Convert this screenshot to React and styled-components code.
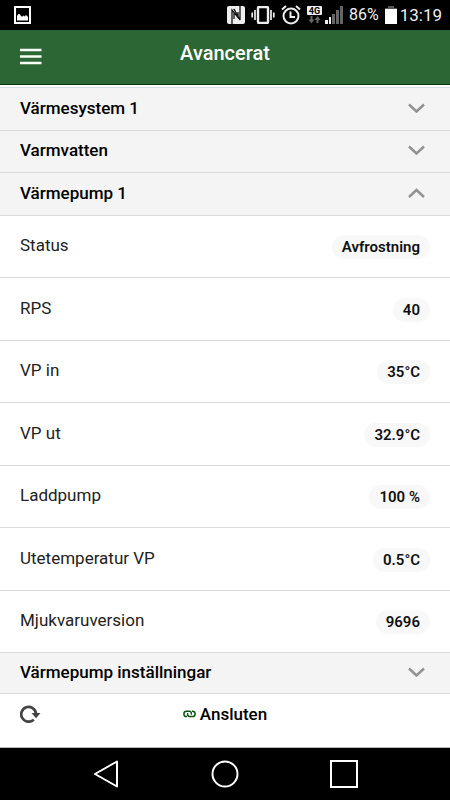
import React, { useState } from "react";
import styled, { createGlobalStyle } from "styled-components";

const GlobalStyle = createGlobalStyle`
  *, *::before, *::after { box-sizing: border-box; }
  body {
    margin: 0;
    background: #fff;
    color: #000;
    font-family: Roboto, "Liberation Sans", sans-serif;
  }
  button {
    margin: 0;
    padding: 0;
    border: 0;
    background: none;
    color: inherit;
    font: inherit;
    cursor: pointer;
  }
  svg { display: block; flex: none; }
`;

const Screen = styled.div`
  display: flex;
  flex-direction: column;
  min-height: 100vh;
`;

const StatusBar = styled.div`
  display: flex;
  align-items: center;
  justify-content: space-between;
  height: 30px;
  padding: 0 8px 0 14px;
  background: #000;
  color: #eee;
`;

const StatusGroup = styled.div`
  display: flex;
  align-items: center;
  gap: ${(p) => (p.$tight ? 3 : 6)}px;
`;

const StatusText = styled.span`
  font-size: ${(p) => (p.$clock ? 17 : 16)}px;
  line-height: 30px;
`;

const AppBar = styled.header`
  display: grid;
  grid-template-columns: 1fr auto 1fr;
  height: 55px;
  padding: 0 20px;
  border-bottom: 1px solid #063b0b;
  background: #2c6635;
  color: #fff;
`;

const MenuButton = styled.button`
  justify-self: start;
  padding-bottom: 2px;
`;

const Title = styled.h1`
  margin: 0;
  font-size: 20px;
  font-weight: 500;
  line-height: 46px;
`;

const List = styled.main`
  display: flex;
  flex: 1;
  flex-direction: column;
  margin-top: 2px;
  border-top: 1px solid #dcdcdc;
`;

const SectionHeading = styled.h2`
  display: flex;
  flex: ${(p) => (p.$last ? "0 0 41px" : "17 1 0")};
  margin: 0;
  border-bottom: 1px solid #dadada;
  background: #f4f4f4;
`;

const SectionButton = styled.button`
  display: flex;
  flex: 1;
  align-items: center;
  justify-content: space-between;
  padding: 0 25px 2px 20px;
  font-size: 17px;
  font-weight: 500;
  line-height: 24px;
  text-align: left;
`;

const Readings = styled.dl`
  display: flex;
  flex: 179 1 0;
  flex-direction: column;
  margin: 0;
`;

const Reading = styled.div`
  display: flex;
  flex: 1;
  align-items: center;
  justify-content: space-between;
  padding: 0 20px;
  border-bottom: 1px solid #dadada;
`;

const Label = styled.dt`
  padding-bottom: 2px;
  color: #222;
  font-size: 17px;
  line-height: 24px;
`;

const Value = styled.dd`
  margin: 2px 0 0;
  padding: 0 10px;
  border-radius: 12px;
  background: #f8f8f8;
  color: #111;
  font-size: 15px;
  font-weight: 600;
  line-height: 24px;
`;

const Footer = styled.footer`
  display: grid;
  grid-template-columns: 1fr auto 1fr;
  align-items: center;
  height: 54px;
  padding: 0 20px 13px;
  border-bottom: 1px solid #bbb;
`;

const RefreshButton = styled.button`
  justify-self: start;
`;

const Connection = styled.div`
  display: flex;
  align-items: center;
  gap: 4px;
  font-size: 17px;
  font-weight: 500;
  line-height: 24px;
`;

const NavBar = styled.nav`
  display: flex;
  align-items: center;
  justify-content: space-between;
  height: 52px;
  padding: 0 92px 0 93px;
  background: #000;
`;

const PictureIcon = () => (
  <svg width="17" height="18" viewBox="0 0 17 18">
    <rect x="1" y="1" width="15" height="16" fill="none" stroke="#fff" strokeWidth="2" />
    <path d="M3 14.500V10l1.500-2h1l2 2.500h1l1-1 1 1 1.500-1.500 2 2v3.500z" fill="#fff" />
  </svg>
);

const NfcIcon = () => (
  <svg width="18" height="18" viewBox="0 0 18 18">
    <rect width="18" height="18" rx="2" fill="#eee" />
    <path d="M5 18V4L11 11.500V6M7 4v-1L13 14V0M7 7v6" fill="none" stroke="#111" strokeWidth="1.300" />
  </svg>
);

const VibrateIcon = () => (
  <svg width="24" height="18" viewBox="0 0 24 18" fill="none" stroke="#eee">
    <rect x="7" y="1" width="10" height="16" rx="1" strokeWidth="2.400" />
    <path d="M4 4v10M20 4v10" strokeWidth="1.700" />
    <path d="M1.200 6.500v5M22.800 6.500v5" strokeWidth="1.700" />
  </svg>
);

const AlarmIcon = () => (
  <svg width="20" height="20" viewBox="0 0 20 20" fill="none" stroke="#eee" strokeWidth="2">
    <circle cx="10" cy="11" r="7.500" />
    <path d="M9.500 6.500V12H14M1 4.500 5 1M19 4.500 15 1" />
  </svg>
);

const DataIcon = () => (
  <svg width="15" height="18" viewBox="0 0 15 18">
    <rect width="15" height="9" rx="1" fill="#eee" />
    <text x="7.500" y="8" textAnchor="middle" fontSize="9" fontWeight="700" fill="#000">4G</text>
    <path d="M4.500 10v5M10.500 17v-4" stroke="#666" strokeWidth="2" />
    <path d="M1.500 13.500h6l-3 4zM7.500 14h6l-3-4z" fill="#666" />
  </svg>
);

const SignalIcon = () => (
  <svg width="18" height="18" viewBox="0 0 18 18">
    <path d="M0 14h3v4H0zM4 11h2v7H4z" fill="#eee" />
    <path d="M7 8h3v10H7zM11 4h3v14h-3zM15 0h3v18h-3z" fill="#666" />
  </svg>
);

const BatteryIcon = () => (
  <svg width="12" height="18" viewBox="0 0 12 18">
    <path d="M3 0h6v2h3v2H0V2h3z" fill="#555" />
    <path d="M0 3h12v15H0z" fill="#fff" />
  </svg>
);

const MenuIcon = () => (
  <svg width="22" height="17" viewBox="0 0 22 17">
    <path d="M0 2h21.500M0 8.500h21.500M0 15h21.500" stroke="#f5fff5" strokeWidth="2.400" />
  </svg>
);

const Chevron = ({ open }) => (
  <svg width="17" height="10" viewBox="0 0 17 10">
    <path
      d={open ? "M1 9 8.500 2 16 9" : "M1 1.500 8.500 8.500 16 1.500"}
      fill="none"
      stroke="#929292"
      strokeWidth="2.500"
    />
  </svg>
);

const RefreshIcon = () => (
  <svg width="21" height="18" viewBox="0 0 21 18">
    <path d="M13.800 14.600A7.400 7.400 0 1 1 16 8.500" fill="none" stroke="#444" strokeWidth="2.700" />
    <path d="M11.500 8H20.500L16 13.200z" fill="#444" />
  </svg>
);

const LinkIcon = () => (
  <svg width="13" height="8" viewBox="0 0 13 8" fill="none" stroke="#0d5414" strokeWidth="1.500">
    <path d="M4 6.500H3.500A2.600 2.600 0 0 1 3.500 1.300H6.500A2 2 0 0 1 8 4.500" />
    <path d="M9 1.300h.5A2.600 2.600 0 0 1 9.500 6.500H6.500A2 2 0 0 1 5 3.300" />
  </svg>
);

const BackIcon = () => (
  <svg width="26" height="28" viewBox="0 0 26 28">
    <path d="M24 1.500v25L2 14z" fill="none" stroke="#fff" strokeWidth="2" strokeLinejoin="round" />
  </svg>
);

const HomeIcon = () => (
  <svg width="28" height="28" viewBox="0 0 28 28">
    <circle cx="14" cy="14" r="12.500" fill="none" stroke="#fff" strokeWidth="2" />
  </svg>
);

const RecentIcon = () => (
  <svg width="28" height="28" viewBox="0 0 28 28">
    <rect x="1" y="1" width="26" height="26" fill="none" stroke="#fff" strokeWidth="2" />
  </svg>
);

const readings = [
  ["Status", "Avfrostning"],
  ["RPS", "40"],
  ["VP in", "35°C"],
  ["VP ut", "32.9°C"],
  ["Laddpump", "100 %"],
  ["Utetemperatur VP", "0.5°C"],
  ["Mjukvaruversion", "9696"],
];

function Section({ title, open = false, last = false, onToggle }) {
  return (
    <SectionHeading $last={last}>
      <SectionButton type="button" aria-expanded={open} onClick={onToggle}>
        {title}
        <Chevron open={open} />
      </SectionButton>
    </SectionHeading>
  );
}

export default function App() {
  const [open, setOpen] = useState("Värmepump 1");
  const section = (title, last) => (
    <Section
      title={title}
      last={last}
      open={open === title}
      onToggle={() => setOpen(open === title ? "" : title)}
    />
  );

  return (
    <Screen>
      <GlobalStyle />
      <StatusBar>
        <PictureIcon />
        <StatusGroup>
          <NfcIcon />
          <VibrateIcon />
          <AlarmIcon />
          <StatusGroup $tight>
            <DataIcon />
            <SignalIcon />
          </StatusGroup>
          <StatusText>86%</StatusText>
          <StatusGroup $tight>
            <BatteryIcon />
            <StatusText $clock>13:19</StatusText>
          </StatusGroup>
        </StatusGroup>
      </StatusBar>
      <AppBar>
        <MenuButton type="button" aria-label="Meny">
          <MenuIcon />
        </MenuButton>
        <Title>Avancerat</Title>
      </AppBar>
      <List>
        {section("Värmesystem 1")}
        {section("Varmvatten")}
        {section("Värmepump 1")}
        {open === "Värmepump 1" && (
          <Readings>
            {readings.map(([label, value]) => (
              <Reading key={label}>
                <Label>{label}</Label>
                <Value>{value}</Value>
              </Reading>
            ))}
          </Readings>
        )}
        {section("Värmepump inställningar", true)}
      </List>
      <Footer>
        <RefreshButton type="button" aria-label="Uppdatera">
          <RefreshIcon />
        </RefreshButton>
        <Connection>
          <LinkIcon />
          Ansluten
        </Connection>
      </Footer>
      <NavBar>
        <button type="button" aria-label="Tillbaka"><BackIcon /></button>
        <button type="button" aria-label="Hem"><HomeIcon /></button>
        <button type="button" aria-label="Senaste"><RecentIcon /></button>
      </NavBar>
    </Screen>
  );
}
